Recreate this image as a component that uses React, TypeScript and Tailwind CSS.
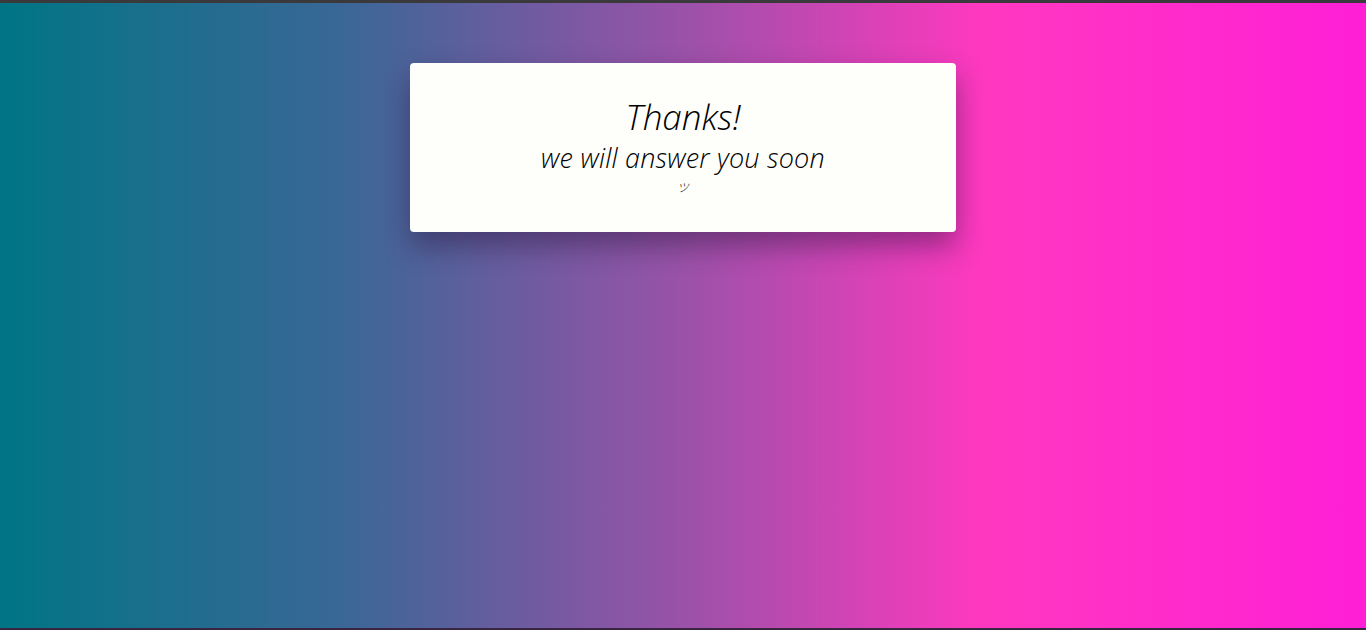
import React from 'react';

export default function App() {
  return (
    <div className="h-[630px] w-full flex flex-col bg-[#2b2b2b]">
      <div className="h-[3px] bg-[#3a3a3c]" />
      <main
        className="flex-1 flex flex-col items-center pt-[60px] bg-[linear-gradient(to_right,#007585_0%,#3a6796_25%,#9a52a8_50%,#ff38c0_72%,#ff1fd6_100%)]"
        style={{ fontFamily: '"Open Sans", "Lato", sans-serif' }}
      >
        {/* Thank you card */}
        <div className="w-[546px] h-[169px] rounded-[4px] bg-[#fefffa] shadow-[0_14px_28px_rgba(40,20,60,0.45)] flex flex-col items-center pt-[32px] text-black italic font-light">
          <h1 className="text-[35px] leading-[44px]">Thanks!</h1>
          <p className="text-[27px] leading-[34px] tracking-[0.2px] mt-[2px]">we will answer you soon</p>
          <span className="text-[12px] leading-[16px] mt-[4px]" style={{ fontFamily: '"Noto Sans CJK JP", sans-serif' }}>ツ</span>
        </div>
      </main>
      <div className="h-[2px] bg-[#3a2540]" />
    </div>
  );
}
